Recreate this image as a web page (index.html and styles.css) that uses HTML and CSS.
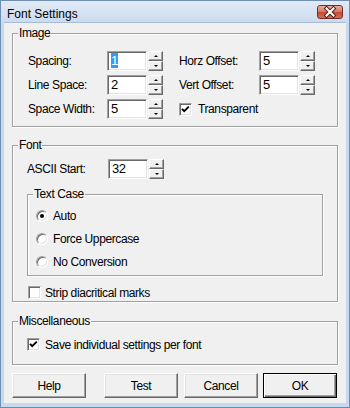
FILE: index.html
```html
<!DOCTYPE html>
<html lang="en">
<head>
    <meta charset="UTF-8">
    <title>Font Settings</title>
    <link rel="stylesheet" href="styles.css">
</head>
<body>

<div class="window">
    <div class="titlebar">
        <span class="title">Font Settings</span>
        <span class="close">
            <svg width="24" height="12" viewBox="0 0 24 12">
                <path d="M8.5 2.5 L15.5 9.5 M15.5 2.5 L8.5 9.5" stroke="#5a2119" stroke-width="4" stroke-linecap="square"/>
                <path d="M8.5 2.5 L15.5 9.5 M15.5 2.5 L8.5 9.5" stroke="#fff" stroke-width="2" stroke-linecap="square"/>
            </svg>
        </span>
    </div>

    <div class="client">
        <fieldset class="group group-image">
            <legend>Image</legend>
            <div class="image-body">
                <div class="row">
                    <label class="lbl">Spacing:</label>
                    <div class="spin"><div class="edit"><span class="sel">1</span></div><div class="arrows"><span class="up"></span><span class="down"></span></div></div>
                    <label class="lbl lbl-right">Horz Offset:</label>
                    <div class="spin"><div class="edit">5</div><div class="arrows"><span class="up"></span><span class="down"></span></div></div>
                </div>
                <div class="row">
                    <label class="lbl">Line Space:</label>
                    <div class="spin"><div class="edit">2</div><div class="arrows"><span class="up"></span><span class="down"></span></div></div>
                    <label class="lbl lbl-right">Vert Offset:</label>
                    <div class="spin"><div class="edit">5</div><div class="arrows"><span class="up"></span><span class="down"></span></div></div>
                </div>
                <div class="row">
                    <label class="lbl">Space Width:</label>
                    <div class="spin"><div class="edit">5</div><div class="arrows"><span class="up"></span><span class="down"></span></div></div>
                    <div class="check-row transparent">
                        <span class="checkbox"><svg width="9" height="9" viewBox="0 0 9 9"><polyline points="1,3.8 3.2,6.2 7.8,1.6" fill="none" stroke="#000" stroke-width="1.9"/></svg></span>
                        <span>Transparent</span>
                    </div>
                </div>
            </div>
        </fieldset>

        <fieldset class="group group-font">
            <legend>Font</legend>
            <div class="font-body">
                <div class="row">
                    <label class="lbl lbl-ascii">ASCII Start:</label>
                    <div class="spin"><div class="edit">32</div><div class="arrows"><span class="up"></span><span class="down"></span></div></div>
                </div>

                <fieldset class="group group-case">
                    <legend>Text Case</legend>
                    <div class="case-body">
                        <div class="radio-row"><span class="radio on"></span><span>Auto</span></div>
                        <div class="radio-row"><span class="radio"></span><span>Force Uppercase</span></div>
                        <div class="radio-row"><span class="radio"></span><span>No Conversion</span></div>
                    </div>
                </fieldset>

                <div class="check-row strip">
                    <span class="checkbox"></span>
                    <span>Strip diacritical marks</span>
                </div>
            </div>
        </fieldset>

        <fieldset class="group group-misc">
            <legend>Miscellaneous</legend>
            <div class="misc-body">
                <div class="check-row">
                    <span class="checkbox"><svg width="9" height="9" viewBox="0 0 9 9"><polyline points="1,3.8 3.2,6.2 7.8,1.6" fill="none" stroke="#000" stroke-width="1.9"/></svg></span>
                    <span>Save individual settings per font</span>
                </div>
            </div>
        </fieldset>

        <div class="buttons">
            <button class="btn">Help</button>
            <button class="btn btn-test">Test</button>
            <button class="btn btn-cancel">Cancel</button>
            <button class="btn btn-ok">OK</button>
        </div>
    </div>
</div>

</body>
</html>
```

FILE: styles.css
```css
body {
    margin: 0;
    font-family: "Liberation Sans", Arial, sans-serif;
    font-size: 12px;
    letter-spacing: -0.4px;
    color: #000;
}

.window {
    width: 350px;
    height: 408px;
    box-sizing: border-box;
    background: linear-gradient(#e2ebf6, #c8d9ee 24px, #c8d9ee);
    border: 1px solid #6f8fb6;
    border-bottom-color: #2e9ee0;
    padding: 0 3px 4px 3px;
    display: flex;
    flex-direction: column;
}

.titlebar {
    height: 22px;
    display: flex;
    justify-content: space-between;
    padding: 0 0 0 3px;
}

.title {
    font-size: 12px;
    letter-spacing: 0;
    line-height: 14px;
    padding-top: 6px;
}

.close {
    width: 26px;
    height: 14px;
    box-sizing: border-box;
    margin-top: 4px;
    margin-right: 3px;
    border: 1px solid #6e2d25;
    border-radius: 3px;
    background: linear-gradient(#e9b0a4, #d77a68 45%, #c44a35 55%, #d2705a);
    display: flex;
    align-items: center;
    justify-content: center;
}

.client {
    flex: 1;
    background: #f0f0f0;
    border-top: 1px solid #a7bcd6;
    margin-top: -1px;
}

/* group boxes */
.group {
    margin: 0 8px;
    padding: 0;
    min-width: 0;
    border: 1px solid #a0a0a0;
    box-shadow: inset 1px 1px #fff, 1px 1px #fff;
}

.group legend {
    margin-left: 5px;
    padding: 0 1px;
    line-height: 14px;
    background: #f0f0f0;
}

.group-image {
    margin-top: 3px;
}

.image-body {
    display: flex;
    flex-direction: column;
    gap: 4px;
    padding: 11px 0 7px 15px;
}

.row {
    display: flex;
    align-items: center;
    height: 20px;
}

.lbl {
    width: 79px;
}

.lbl-right {
    width: 80px;
    margin-left: 16px;
}

.lbl-ascii {
    width: 81px;
}

.group-font {
    margin-top: 11px;
}

.font-body {
    padding: 7px 14px 2px 14px;
}

.group-case {
    margin: 8px 0 0 0;
}

.case-body {
    padding: 3px 0 2px 8px;
}

.radio-row {
    height: 23px;
    display: flex;
    align-items: center;
    gap: 5px;
}

.radio {
    width: 12px;
    height: 12px;
    box-sizing: border-box;
    border-radius: 50%;
    border: 1px solid;
    border-color: #a0a0a0 #fff #fff #a0a0a0;
    box-shadow: inset 1px 1px #696969, inset -1px -1px #e3e3e3;
    background: #fff;
    display: flex;
    align-items: center;
    justify-content: center;
}

.radio.on::after {
    content: "";
    width: 4px;
    height: 4px;
    border-radius: 50%;
    background: #000;
}

.group-misc {
    margin-top: 12px;
}

.misc-body {
    padding: 10px 0 13px 14px;
}

/* edits with spinners */
.spin {
    display: flex;
    height: 20px;
    gap: 1px;
}

.edit {
    width: 40px;
    height: 20px;
    box-sizing: border-box;
    border: 1px solid;
    border-color: #a0a0a0 #fff #fff #a0a0a0;
    box-shadow: inset 1px 1px #696969, inset -1px -1px #e3e3e3;
    background: #fff;
    padding: 0 0 0 3px;
    font-size: 13px;
    line-height: 18px;
}

.sel {
    background: #3399ff;
    color: #fff;
}

.arrows {
    width: 15px;
    display: flex;
    flex-direction: column;
}

.arrows span {
    height: 10px;
    box-sizing: border-box;
    border: 1px solid;
    border-color: #fff #696969 #696969 #fff;
    box-shadow: inset -1px -1px #a0a0a0;
    background: #f0f0f0;
    display: flex;
    align-items: center;
    justify-content: center;
}

.arrows .up::after,
.arrows .down::after {
    content: "";
    border-left: 2px solid transparent;
    border-right: 2px solid transparent;
}

.arrows .up::after {
    border-bottom: 2px solid #000;
}

.arrows .down::after {
    border-top: 2px solid #000;
}

/* check boxes */
.check-row {
    display: flex;
    align-items: center;
    gap: 5px;
    height: 13px;
}

.strip {
    margin: 10px 0 0 1px;
    gap: 4px;
}

.checkbox {
    width: 13px;
    height: 13px;
    box-sizing: border-box;
    border: 1px solid;
    border-color: #a0a0a0 #fff #fff #a0a0a0;
    box-shadow: inset 1px 1px #696969, inset -1px -1px #e3e3e3;
    background: #fff;
    padding: 1px 0 0 1px;
}

.checkbox svg {
    display: block;
}

.transparent {
    margin-left: 16px;
    gap: 6px;
}

/* buttons */
.buttons {
    display: flex;
    margin: 8px 0 0 8px;
}

.btn {
    width: 74px;
    height: 25px;
    font-family: inherit;
    font-size: 12px;
    letter-spacing: -0.4px;
    color: #000;
    background: #f0f0f0;
    border: 1px solid;
    border-color: #fff #696969 #696969 #fff;
    box-shadow: inset -1px -1px #a0a0a0, inset 1px 1px #e3e3e3;
    padding: 0;
}

.btn-test {
    margin-left: 18px;
}

.btn-cancel {
    margin-left: 6px;
}

.btn-ok {
    margin-left: 5px;
    border-color: #000;
    box-shadow: inset 1px 1px #fff, inset -1px -1px #696969, inset -2px -2px #a0a0a0;
}
```
